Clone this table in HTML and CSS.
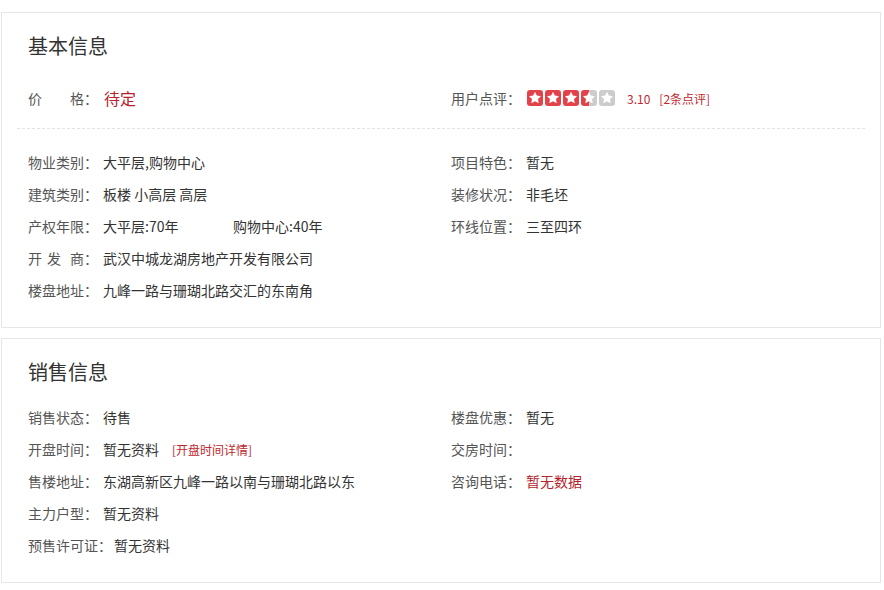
FILE: index.html
```html
<!DOCTYPE html>
<html lang="zh-CN">
<head>
<meta charset="utf-8">
<title>楼盘信息</title>
<link rel="stylesheet" href="styles.css">
</head>
<body>
<div class="page">
  <section class="card">
    <h2 class="title">基本信息</h2>
    <div class="grid top">
      <div class="item"><span class="label">价<span class="sp4"></span>格：</span><span class="value price">待定</span></div>
      <div class="item">
        <span class="label">用户点评：</span>
        <span class="stars">
          <i class="star on"><svg viewBox="0 0 16 16"><path d="M8 1.8l1.85 3.75 4.15.6-3 2.9.7 4.1L8 11.2l-3.7 1.95.7-4.1-3-2.9 4.15-.6z"/></svg></i>
          <i class="star on"><svg viewBox="0 0 16 16"><path d="M8 1.8l1.85 3.75 4.15.6-3 2.9.7 4.1L8 11.2l-3.7 1.95.7-4.1-3-2.9 4.150-.6z"/></svg></i>
          <i class="star on"><svg viewBox="0 0 16 16"><path d="M8 1.8l1.85 3.75 4.15.6-3 2.9.7 4.1L8 11.2l-3.7 1.95.7-4.1-3-2.9 4.15-.6z"/></svg></i>
          <i class="star half"><svg viewBox="0 0 16 16"><path d="M8 1.8l1.85 3.75 4.15.6-3 2.9.7 4.1L8 11.2l-3.7 1.95.7-4.1-3-2.9 4.15-.6z"/></svg></i>
          <i class="star"><svg viewBox="0 0 16 16"><path d="M8 1.8l1.85 3.75 4.15.6-3 2.9.7 4.1L8 11.2l-3.7 1.95.7-4.1-3-2.9 4.15-.6z"/></svg></i>
        </span>
        <span class="score">3.10</span><span class="score-link">[2条点评]</span>
      </div>
    </div>
    <div class="divider"></div>
    <div class="grid">
      <div class="item"><span class="label">物业类别：</span><span class="value">大平层,购物中心</span></div>
      <div class="item"><span class="label">项目特色：</span><span class="value">暂无</span></div>
      <div class="item"><span class="label">建筑类别：</span><span class="value">板楼 小高层 高层</span></div>
      <div class="item"><span class="label">装修状况：</span><span class="value">非毛坯</span></div>
      <div class="item"><span class="label">产权年限：</span><span class="value"><span class="term">大平层:70年</span>购物中心:40年</span></div>
      <div class="item"><span class="label">环线位置：</span><span class="value">三至四环</span></div>
      <div class="item full"><span class="label">开<span class="sp1"></span>发<span class="sp2"></span>商：</span><span class="value">武汉中城龙湖房地产开发有限公司</span></div>
      <div class="item full"><span class="label">楼盘地址：</span><span class="value">九峰一路与珊瑚北路交汇的东南角</span></div>
    </div>
  </section>

  <section class="card">
    <h2 class="title">销售信息</h2>
    <div class="grid sale">
      <div class="item"><span class="label">销售状态：</span><span class="value">待售</span></div>
      <div class="item"><span class="label">楼盘优惠：</span><span class="value">暂无</span></div>
      <div class="item"><span class="label">开盘时间：</span><span class="value">暂无资料</span><span class="detail">[开盘时间详情]</span></div>
      <div class="item"><span class="label">交房时间：</span><span class="value"></span></div>
      <div class="item"><span class="label">售楼地址：</span><span class="value">东湖高新区九峰一路以南与珊瑚北路以东</span></div>
      <div class="item"><span class="label">咨询电话：</span><span class="value red">暂无数据</span></div>
      <div class="item full"><span class="label">主力户型：</span><span class="value">暂无资料</span></div>
      <div class="item full"><span class="label auto">预售许可证：</span><span class="value">暂无资料</span></div>
    </div>
  </section>
</div>
</body>
</html>
```

FILE: styles.css
```css
* { box-sizing: border-box; }
html, body { margin: 0; padding: 0; background: #fff; }
body {
  font-family: "Microsoft YaHei", "Noto Sans CJK SC", "Noto Sans", sans-serif;
  font-size: 14px;
  color: #333;
}
.page {
  padding: 12px 3px 0 1px;
  display: flex;
  flex-direction: column;
  gap: 10px;
}
.card {
  border: 1px solid #e6e6e6;
  padding: 0 15px 21px;
}
.title {
  margin: 19px 0 0 11px;
  font-size: 20px;
  font-weight: normal;
  line-height: 28px;
  color: #333;
}
.grid {
  display: grid;
  grid-template-columns: 423px 1fr;
  padding-left: 11px;
}
.grid.top { margin-top: 22px; }
.grid.sale { margin-top: 15px; }
.item {
  display: flex;
  align-items: center;
  height: 32px;
  white-space: nowrap;
}
.item.full { grid-column: 1 / 2; }
.label {
  width: 75px;
  flex: none;
  color: #555;
}
.label.auto { width: auto; margin-right: 2px; }
.sp4 { display: inline-block; width: 28px; }
.sp1 { display: inline-block; width: 5px; }
.sp2 { display: inline-block; width: 9px; }
.value { color: #333; }
.value.price { font-size: 16px; color: #b5232d; margin-left: 1px; }
.value.red { color: #b5232d; }
.term { display: inline-block; width: 130px; }
.detail {
  color: #c0282f;
  font-size: 12px;
  margin-left: 13px;
}
.divider {
  border-top: 1px dashed #e2e2e2;
  margin: 14px 0 17px;
}
.stars {
  display: flex;
  gap: 2px;
  margin-left: 1px;
}
.star {
  width: 16px;
  height: 16px;
  border-radius: 3px;
  background: #ccc;
  display: block;
}
.star.on { background: #e3424a; }
.star.half { background: linear-gradient(90deg, #e3424a 50%, #ccc 50%); }
.star svg { width: 16px; height: 16px; display: block; fill: #fff; }
.score { color: #c0282f; font-size: 12px; margin-left: 12px; }
.score-link { color: #c0282f; font-size: 12px; margin-left: 9px; }
```
